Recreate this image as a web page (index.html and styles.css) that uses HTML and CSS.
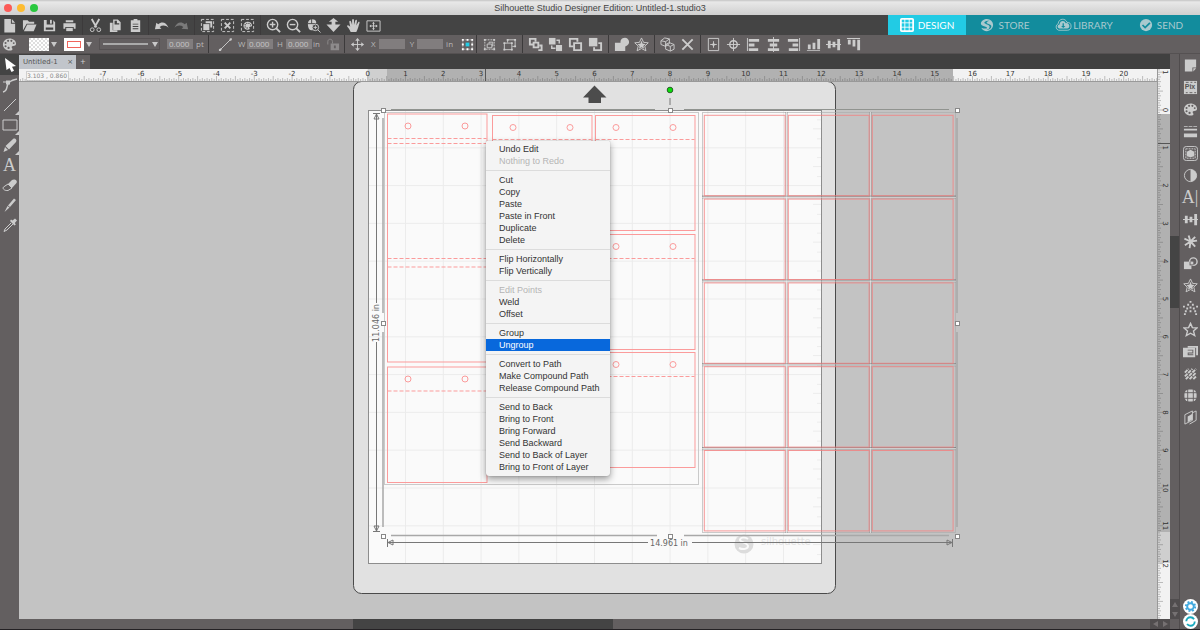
FILE: index.html
```html
<!DOCTYPE html>
<html lang="en">
<head>
<meta charset="utf-8">
<title>Silhouette Studio Designer Edition: Untitled-1.studio3</title>
<link rel="stylesheet" href="styles.css">
</head>
<body>
<svg class="defs" aria-hidden="true">
  <symbol id="new" viewBox="0 0 16 16"><path d="M2.500 1h7v5h4.500v9.500H2.500z"/><path d="M10.500 1l3.500 4h-3.500z"/></symbol>
  <symbol id="open" viewBox="0 0 16 16"><path d="M1 13V2.500h5L7.500 4H13v2H5z"/><path d="M5.500 7H15.500L12.500 14H2z"/></symbol>
  <symbol id="save" viewBox="0 0 16 16"><path fill-rule="evenodd" d="M2 2h3v5h7V2.500l2 2V14H2zM4 10v2.500h8V10z"/><path d="M8.500 2h2v4h-2z"/></symbol>
  <symbol id="print" viewBox="0 0 16 16"><path d="M4 2.500h8v2H4zM1.500 5.500h13v6h-2v-2h-9v2h-2z"/><path d="M4.500 10.500h7V14h-7z"/></symbol>
  <symbol id="cut" viewBox="0 0 16 16"><path d="M4 1l5 9M12 1L7 10" class="l2"/><circle cx="4.500" cy="12.500" r="2" class="l"/><circle cx="11.500" cy="12.500" r="2" class="l"/></symbol>
  <symbol id="copy" viewBox="0 0 16 16"><path d="M2 5h3v8h5v2H2z"/><path fill-rule="evenodd" d="M5.500 1.500h5l3 3v8.500h-8zM7 3v4h5V5.500h-2.500V3z"/><path d="M7 8h5v4H7z"/></symbol>
  <symbol id="paste" viewBox="0 0 16 16"><path fill-rule="evenodd" d="M3 2.500h3V1h4v1.500h3V15H3zM5 6v1h6V6zM5 8.500v1h6v-1zM5 11v1h6v-1z"/></symbol>
  <symbol id="undo" viewBox="0 0 16 16"><path d="M1 12L2.500 5l2 1.700C8 3.500 13 4 15.500 10.500 12.500 7.500 9 7.500 6 9.500l2 2z"/></symbol>
  <symbol id="redo" viewBox="0 0 16 16"><path d="M15 12L13.500 5l-2 1.700C8 3.500 3 4 .5 10.500 3.500 7.500 7 7.500 10 9.500l-2 2z"/></symbol>
  <symbol id="selall" viewBox="0 0 16 16"><path d="M1.500 1.500h13v13h-13z" class="dash"/><path d="M6 3.500h7V10h-2V5.500H6z"/><path d="M3.500 6.500h6.500V13H3.500z"/></symbol>
  <symbol id="desel" viewBox="0 0 16 16"><path d="M1.500 1.500h13v13h-13z" class="dash"/><path d="M5 5l6 6M11 5l-6 6" class="l2"/></symbol>
  <symbol id="palette" viewBox="0 0 16 16"><path fill-rule="evenodd" d="M8 1.500c4 0 7 2.500 7 5.800 0 2-1.500 2.200-3 2.200-2 0-2 1.500-1 2.700.8 1.200-.5 2.300-3 2.300-4 0-7-3-7-6.500s3-6.500 7-6.500zM6.500 3a1 1 0 100 2.200 1 1 0 000-2.200zM10 3a1 1 0 100 2.200A1 1 0 0010 3zM3.800 5.300a1 1 0 100 2.200 1 1 0 000-2.200zM3.800 8.800a1 1 0 100 2.200 1 1 0 000-2.200zM12.500 5.500a1 1 0 100 2 1 1 0 000-2zM7 10.500a1.200 1.200 0 100 2.400 1.200 1.200 0 000-2.400z"/></symbol>
  <symbol id="selcol" viewBox="0 0 16 16"><path d="M1.500 1.500h13v13h-13z" class="dash"/><use href="#palette" x="3" y="3" width="10.500" height="10.500"/></symbol>
  <symbol id="zin" viewBox="0 0 16 16"><circle cx="7" cy="7" r="5.500" class="m"/><path d="M11 11l4 4" class="l2"/><path d="M4 7h6M7 4v6" class="m"/></symbol>
  <symbol id="zout" viewBox="0 0 16 16"><circle cx="7" cy="7" r="5.500" class="m"/><path d="M11 11l4 4" class="l2"/><path d="M4 7h6" class="m"/></symbol>
  <symbol id="zsel" viewBox="0 0 16 16"><path d="M2 6c0-6 9-6 9-1L8 7v6C4 14 2 11 2 6z"/><path d="M2 6h8M6 1v5" stroke="#444"/><circle cx="10" cy="10" r="3.500" fill="#444" stroke="#ccc"/><path d="M12.500 12.500l3 3M8 10h4M10 8v4" class="l"/></symbol>
  <symbol id="zdrag" viewBox="0 0 16 16"><path d="M8 0l5 4h-3v3h5.500L8 15 .5 7H6V4H3z"/></symbol>
  <symbol id="hand" viewBox="0 0 16 16"><path d="M5 15C4 12 2 10 1 8.500 2 7 3.500 8.500 4.500 9.500L3.500 4c0-1.500 1.500-1.500 2 0l1 3.500V2c.3-1.300 1.700-1.300 2 0v5.500L10 2.500c.6-1.200 1.800-.8 1.700.5l-.7 5 2-3.500c.8-1 1.800-.3 1.400.8-1 3-1.400 6-3.400 9.700z"/></symbol>
  <symbol id="fit" viewBox="0 0 16 16"><path d="M1 3h14v11H1z" class="l"/><path d="M8 5v7M4.500 8.500h7" class="l"/><path d="M8 4l1.500 2h-3zM8 13l1.500-2h-3zM3.500 8.500l2-1.500v3zM12.500 8.500l-2-1.500v3z"/></symbol>
  <symbol id="line" viewBox="0 0 16 16"><path d="M2.500 13.500l11-11" class="l"/><path d="M1 13l2-1 1 1-1 2H1zM12 2l2-1 1 1-1 2h-1z"/></symbol>
  <symbol id="plainline" viewBox="0 0 16 16"><path d="M2 14L14 2" class="l"/></symbol>
  <symbol id="lock" viewBox="0 0 16 16"><path fill-rule="evenodd" d="M6 7h9v7H6zM9.500 9v3h2V9z"/><path d="M3 8V5c0-3.500 5-3.500 5 0v2" class="l"/></symbol>
  <symbol id="move" viewBox="0 0 16 16"><path d="M8 2v12M2 8h12" class="l"/><path d="M8 1l2.500 3h-5zM8 15l2.500-3h-5zM1 8l3-2.500v5zM15 8l-3-2.500v5z"/></symbol>
  <symbol id="nine" viewBox="0 0 16 16"><path d="M3 3h10v10H3z" class="l" stroke-dasharray="1 1"/><path fill="#fff" d="M2 2h2v2H2zM7 2h2v2H7zM12 2h2v2h-2zM2 7h2v2H2zM12 7h2v2h-2zM2 12h2v2H2zM7 12h2v2H7zM12 12h2v2h-2z"/><path fill="#22cbe4" d="M6 6h4v4H6z"/></symbol>
  <symbol id="group" viewBox="0 0 16 16"><path d="M3 3h10v10H3z" class="l" stroke-dasharray="2 1"/><path d="M5.500 7.500h5v4h-5zM7.500 7V5.500h4v4h-1" class="l"/><path d="M2 2h2v2H2zM12 2h2v2h-2zM2 12h2v2H2zM12 12h2v2h-2z"/></symbol>
  <symbol id="ungroup" viewBox="0 0 16 16"><path d="M2.500 6.500h8v7h-8zM6 6V3h8v7h-3" class="l"/><path d="M1.500 5.500h2v2h-2zM9.500 5.500h2v2h-2zM1.500 12.500h2v2h-2zM9.500 12.500h2v2h-2zM5 2h2v2H5zM13 2h2v2h-2zM13 9h2v2h-2z"/></symbol>
  <symbol id="front" viewBox="0 0 16 16"><path d="M6 8H2V2h6v3M11 14h3.500V9H12" class="l2"/><path d="M6 6h5v5H6z" class="l2"/></symbol>
  <symbol id="back" viewBox="0 0 16 16"><path d="M1 1h7v7H1z"/><path d="M9 3.500h3V7M4 9v3h4" class="m"/><path d="M8.500 8.500H15V15H8.500z"/></symbol>
  <symbol id="forward" viewBox="0 0 16 16"><path d="M6 10H2V2h8v3" class="l2"/><path d="M6.500 6.500H14V14H6.500z" class="l2"/></symbol>
  <symbol id="backward" viewBox="0 0 16 16"><path d="M1 1h9v9H1z"/><path d="M11 6.500h3V14H6.500v-3" class="l2"/></symbol>
  <symbol id="weld" viewBox="0 0 16 16"><path d="M1 6h6a4.500 4.500 0 117 3l-2 1v5H1z"/></symbol>
  <symbol id="star" viewBox="0 0 16 16"><path d="M8 1.500l2 4.500 5 .4-3.800 3.300L12.500 14.500 8 12l-4.500 2.500 1.300-4.800L1 6.400 6 6z" class="m"/></symbol>
  <symbol id="stars" viewBox="0 0 16 16"><path d="M8 1l2.200 4.700 5 .5-3.700 3.500 1.200 5L8 12.300l-4.700 2.400 1.200-5L.8 6.200l5-.5z" class="l"/><path d="M8 4l1.300 3.200 3.200.3L10 9.500l.7 3L8 11l-2.700 1.500.7-3-2.500-2 3.200-.3z"/></symbol>
  <symbol id="boxes" viewBox="0 0 16 16"><path d="M1 4l4-3 5 1v5l-4 3-5-2zM1 4l5 1 4-3M6 5v5M6 8l4-2 5 2v5l-4 2-5-2zM6 8l5 2 4-2M11 10v5" class="l"/></symbol>
  <symbol id="cross" viewBox="0 0 16 16"><path d="M2.500 2.500l11 11M13.500 2.500l-11 11" class="l2"/></symbol>
  <symbol id="centre" viewBox="0 0 16 16"><path d="M2.500 1.500h11v13h-11zM8 4.500v7M4.500 8h7" class="l"/><path d="M8 6l2 2-2 2-2-2z"/></symbol>
  <symbol id="target" viewBox="0 0 16 16"><circle cx="8" cy="8" r="4" class="m"/><path d="M8 1v14M1 8h14" class="l"/></symbol>
  <symbol id="al" viewBox="0 0 16 16"><path d="M1 1h1v14H1zM3 2h11v3H3zM3 7h6v3H3zM3 12h10v3H3z"/></symbol>
  <symbol id="ac" viewBox="0 0 16 16"><path d="M7.500 0h1v16h-1zM2 2h12v3H2zM4 7h8v3H4zM2 12h12v3H2z"/></symbol>
  <symbol id="ar" viewBox="0 0 16 16"><path d="M14 1h1v14h-1zM2 2h11v3H2zM7 7h6v3H7zM3 12h10v3H3z"/></symbol>
  <symbol id="ab" viewBox="0 0 16 16"><path d="M1 14h14v1H1zM2 8h3v5H2zM7 6h3v7H7zM12 2h3v11h-3z"/></symbol>
  <symbol id="am" viewBox="0 0 16 16"><path d="M0 7.500h16v1H0zM2 4h3v8H2zM7 5h3v6H7zM12 2h3v12h-3z"/></symbol>
  <symbol id="at" viewBox="0 0 16 16"><path d="M1 1h14v1H1zM2 3h3v5H2zM7 3h3v7H7zM12 3h3v11h-3z"/></symbol>
  <symbol id="arrow" viewBox="0 0 16 16"><path fill="#fff" d="M3 1l11 8-4 .7 2 4-2.500 1.300-2-4L4.500 13z"/></symbol>
  <symbol id="curve" viewBox="0 0 16 16"><path d="M1 15c5-1 3-5 5-8 2-4 5-4 9-5" class="m"/><path d="M4 3.500h4v4H4z"/><path d="M1 5h4" class="l"/></symbol>
  <symbol id="rect" viewBox="0 0 16 16"><path d="M1 3h14v10H1z" class="l"/></symbol>
  <symbol id="pencil" viewBox="0 0 16 16"><path d="M1.500 15l1.500-5 3 3zM3.500 9L11 2c2-1.500 4.500 1 3 3L7 12.500z"/></symbol>
  <symbol id="eraser" viewBox="0 0 16 16"><path d="M6 7l4-4c2-1.500 6 0 4.500 3L10 11z"/><path d="M6 7l-4.500 3c-1.500 2 1.500 4 4.500 3.500L10 11z" class="l"/></symbol>
  <symbol id="knife" viewBox="0 0 16 16"><path d="M2.500 15l3-6 2 1.500zM6 8.500L12 1.500l2 1.500-6 7z"/></symbol>
  <symbol id="dropper" viewBox="0 0 16 16"><path d="M9 2.500l1.500 1L13 1.500l2 2L12.800 6l1 1.500-1.300 1L8 4z"/><path d="M9 6l-6 6-1 2.500L5 13l6-6" class="l"/></symbol>
  <symbol id="page" viewBox="0 0 16 16"><path d="M2 1.500h12V10h-4v4.500H2z"/><path d="M11 11h3l-3 3.500z"/></symbol>
  <symbol id="frame" viewBox="0 0 16 16"><path d="M1 1h14v14H1z"/><path d="M3 2.500h3M8 2.500h2M12 2.500h2M3 13.500h2M7 13.500h3M12 13.500h2" fill="none" stroke="#635f60"/></symbol>
  <symbol id="lines" viewBox="0 0 16 16"><path d="M1 2h4v1H1zM6 2h4v1H6zM11 2h4v1h-4zM1 5h14v2H1zM1 10h14v4H1z"/></symbol>
  <symbol id="trace" viewBox="0 0 16 16"><rect x=".5" y=".5" width="15" height="15" rx="3" class="l"/><path d="M3 3h10v10H3z" class="l" stroke-dasharray="2 1"/><path d="M4 6l2-1 2-1 2 1 2 1v5l-4 1-4-1z"/></symbol>
  <symbol id="contrast" viewBox="0 0 16 16"><circle cx="8" cy="8" r="6.500" class="l"/><path d="M8 1.500a6.500 6.500 0 010 13z"/></symbol>
  <symbol id="burst" viewBox="0 0 16 16"><path d="M8 8L6 1.500M8 8l5-5M8 8l7-1M8 8l5 5.500M8 8l-1 7M8 8l-6 4M8 8L1.500 5" class="l2"/></symbol>
  <symbol id="modify" viewBox="0 0 16 16"><path d="M1 6h8v8H1z"/><circle cx="11" cy="6" r="4" class="m"/><path d="M7 6h4v4H7z" fill="#635f60"/><path d="M8 6h3v3H8z"/></symbol>
  <symbol id="dots" viewBox="0 0 16 16"><path d="M7 1h2v2H7zM4.500 4h2v2h-2zM9.500 4h2v2h-2zM0 6h2v2H0zM7 7h2v2H7zM14 6h2v2h-2zM3.500 8h2v2h-2zM10.500 8h2v2h-2zM2 11h2v2H2zM7 11h2v2H7zM12 11h2v2h-2zM1 14h2v2H1zM13 14h2v2h-2z"/></symbol>
  <symbol id="nest" viewBox="0 0 16 16"><path d="M5 2h11v10h-2V4H5z"/><path fill-rule="evenodd" d="M0 4h13v10H0zM5 6v1h5v2H5v3h6v-1H6v-1h5V6z"/></symbol>
  <symbol id="hatch" viewBox="0 0 16 16"><path d="M2 7l4-4M2 11l8-8M3 14L14 3M7 14l7-7M11 14l3-3" fill="none" stroke="#ccc" stroke-width="2" stroke-dasharray="4 1"/></symbol>
  <symbol id="globe" viewBox="0 0 16 16"><rect x="1.500" y="1.500" width="13" height="13" rx="5"/><path d="M5 1v14M11 1v14M1 5h14M1 11h14" fill="none" stroke="#635f60"/></symbol>
  <symbol id="layers" viewBox="0 0 16 16"><path d="M2 5l8-4v10l-8 4zM10 3l4-2v10l-7 4" class="l"/><path d="M5 7l5-3v6l-5 3z"/></symbol>
  <symbol id="gear" viewBox="0 0 16 16"><circle cx="8" cy="8" r="8" fill="#fff"/><circle cx="8" cy="8" r="3.500" fill="none" stroke="#41a9df" stroke-width="2"/><circle cx="8" cy="8" r="5" fill="none" stroke="#41a9df" stroke-width="2" stroke-dasharray="2 1.930"/></symbol>
  <symbol id="sync" viewBox="0 0 16 16"><circle cx="8" cy="8" r="8" fill="#fff"/><circle cx="8" cy="8" r="4.500" fill="none" stroke="#18a9bd" stroke-width="2" stroke-dasharray="11 3"/></symbol>
  <symbol id="grid" viewBox="0 0 16 16"><rect x="1" y="1" width="14" height="14" rx="1" fill="none" stroke="#fff" stroke-width="2"/><path d="M5.500 1v14M10.500 1v14M1 5.500h14M1 10.500h14" fill="none" stroke="#fff"/></symbol>
  <symbol id="swirl" viewBox="0 0 16 16"><path fill-rule="evenodd" d="M8 1a7 7 0 110 14C5 15 2.500 13.500 1.500 11c3 1.500 6.500 1.500 6.500 0S1 9.500 1 6.500C1 3 5 1 8 1zm3 2.500C8 2.500 5 4 5 5.500S11 7.500 11 10s-2 3-3.500 3.500C10 14 13 12 13 9.500S7.500 7 7.500 5.500 9.500 3.500 11 3.500z"/></symbol>
  <symbol id="cloud" viewBox="0 0 20 16"><path d="M5 14a4 4 0 01-.5-7.500C5 0 13 0 14.500 5A4.500 4.500 0 0115 14z" fill="none" stroke="#a9c9ce"/><path fill-rule="evenodd" d="M5.500 12a2.300 2.300 0 01.5-4.500c.5-5 6-5 7-1.500a3 3 0 012 6zM9.500 6v3H7.800l2.500 2.500L12.800 9H11V6z"/></symbol>
  <symbol id="check" viewBox="0 0 16 16"><circle cx="8" cy="8" r="7"/><path d="M4 8l3 3 5.500-5.500" fill="none" stroke="#128c9d" stroke-width="2"/></symbol>
</svg>

<div class="app">
  <header class="titlebar">
    <span class="lights"><i class="red"></i><i class="amber"></i><i class="green"></i></span>
    <h1>Silhouette Studio Designer Edition: Untitled-1.studio3</h1>
  </header>

  <div class="topbar">
    <div class="group"><button aria-label="New"><svg><use href="#new"/></svg></button><button aria-label="Open"><svg><use href="#open"/></svg></button><button aria-label="Save"><svg><use href="#save"/></svg></button><button aria-label="Print"><svg><use href="#print"/></svg></button></div>
    <div class="group"><button aria-label="Cut"><svg><use href="#cut"/></svg></button><button aria-label="Copy"><svg><use href="#copy"/></svg></button><button aria-label="Paste"><svg><use href="#paste"/></svg></button></div>
    <div class="group"><button aria-label="Undo"><svg><use href="#undo"/></svg></button><button class="dim" aria-label="Redo"><svg><use href="#redo"/></svg></button></div>
    <div class="group"><button aria-label="Select all"><svg><use href="#selall"/></svg></button><button aria-label="Deselect"><svg><use href="#desel"/></svg></button><button aria-label="Select by color"><svg><use href="#selcol"/></svg></button></div>
    <div class="group last"><button aria-label="Zoom in"><svg><use href="#zin"/></svg></button><button aria-label="Zoom out"><svg><use href="#zout"/></svg></button><button aria-label="Zoom selection"><svg><use href="#zsel"/></svg></button><button aria-label="Drag zoom"><svg><use href="#zdrag"/></svg></button><button aria-label="Pan"><svg><use href="#hand"/></svg></button><button aria-label="Fit to window"><svg><use href="#fit"/></svg></button></div>
    <nav class="modes">
      <a class="active" href="#design"><svg><use href="#grid"/></svg>DESIGN</a>
      <a href="#store"><svg><use href="#swirl"/></svg>STORE</a>
      <a class="wide" href="#library"><svg><use href="#cloud"/></svg>LIBRARY</a>
      <a href="#send"><svg><use href="#check"/></svg>SEND</a>
    </nav>
  </div>

  <div class="options">
    <div class="group fields style">
      <button aria-label="Colors"><svg><use href="#palette"/></svg></button>
      <button class="swatch fill" aria-label="Fill color"><i></i><b></b></button>
      <button class="swatch stroke" aria-label="Line color"><i></i><b></b></button>
      <button class="linestyle" aria-label="Line style"><i></i><b></b></button>
      <label><input aria-label="Line thickness" value="0.000"><span>pt</span></label>
    </div>
    <div class="group fields size">
      <button aria-label="Scale"><svg><use href="#line"/></svg></button>
      <label><span>W</span><input value="0.000"></label>
      <label><span>H</span><input value="0.000"><span class="unit">in</span></label>
      <button class="dim" aria-label="Lock aspect"><svg><use href="#lock"/></svg></button>
    </div>
    <div class="group fields place">
      <button aria-label="Move"><svg><use href="#move"/></svg></button>
      <label><span>X</span><input></label>
      <label><span>Y</span><input><span class="unit">in</span></label>
      <button aria-label="Anchor point"><svg><use href="#nine"/></svg></button>
    </div>
    <div class="group"><button aria-label="Group"><svg><use href="#group"/></svg></button><button aria-label="Ungroup"><svg><use href="#ungroup"/></svg></button></div>
    <div class="group"><button aria-label="Bring to front"><svg><use href="#front"/></svg></button><button aria-label="Send to back"><svg><use href="#back"/></svg></button><button aria-label="Bring forward"><svg><use href="#forward"/></svg></button><button aria-label="Send backward"><svg><use href="#backward"/></svg></button></div>
    <div class="group"><button aria-label="Weld"><svg><use href="#weld"/></svg></button><button aria-label="Offset"><svg><use href="#stars"/></svg></button></div>
    <div class="group"><button aria-label="Replicate"><svg><use href="#boxes"/></svg></button><button aria-label="Delete"><svg><use href="#cross"/></svg></button></div>
    <div class="group last"><button aria-label="Center to page"><svg><use href="#centre"/></svg></button><button aria-label="Align center"><svg><use href="#target"/></svg></button><button aria-label="Align left"><svg><use href="#al"/></svg></button><button aria-label="Align horizontal center"><svg><use href="#ac"/></svg></button><button aria-label="Align right"><svg><use href="#ar"/></svg></button><button aria-label="Align bottom"><svg><use href="#ab"/></svg></button><button aria-label="Align middle"><svg><use href="#am"/></svg></button><button aria-label="Align top"><svg><use href="#at"/></svg></button></div>
  </div>

  <main class="work">
    <aside class="tools">
      <button class="on" aria-label="Select"><svg><use href="#arrow"/></svg></button>
      <button aria-label="Edit points"><svg><use href="#curve"/></svg></button>
      <button class="more" aria-label="Line"><svg><use href="#plainline"/></svg></button>
      <button class="more" aria-label="Rectangle"><svg><use href="#rect"/></svg></button>
      <button class="more" aria-label="Draw"><svg><use href="#pencil"/></svg></button>
      <button class="letter" aria-label="Text">A</button>
      <button aria-label="Eraser"><svg><use href="#eraser"/></svg></button>
      <button aria-label="Knife"><svg><use href="#knife"/></svg></button>
      <button aria-label="Eyedropper"><svg><use href="#dropper"/></svg></button>
    </aside>

    <section class="document">
      <div class="tabs">
        <div class="tab">Untitled-1<button aria-label="Close tab">×</button></div>
        <button class="add" aria-label="New tab">+</button>
      </div>
      <div class="stage">
        <svg class="hruler" id="hruler"></svg>
        <svg class="vruler" id="vruler"></svg>
        <div class="canvas">
          <svg class="drawing"><g id="drawing" transform="translate(-19 -82)"></g></svg>
          <div class="menu" role="menu">
            <button>Undo Edit</button><button disabled>Nothing to Redo</button><hr>
            <button>Cut</button><button>Copy</button><button>Paste</button><button>Paste in Front</button><button>Duplicate</button><button>Delete</button><hr>
            <button>Flip Horizontally</button><button>Flip Vertically</button><hr>
            <button disabled>Edit Points</button><button>Weld</button><button>Offset</button><hr>
            <button>Group</button><button class="hot">Ungroup</button><hr>
            <button>Convert to Path</button><button>Make Compound Path</button><button>Release Compound Path</button><hr>
            <button>Send to Back</button><button>Bring to Front</button><button>Bring Forward</button><button>Send Backward</button><button>Send to Back of Layer</button><button>Bring to Front of Layer</button>
          </div>
        </div>
      </div>
      <div class="hscroll"><i></i><span><b class="left"></b><b class="right"></b></span></div>
    </section>

    <div class="vscroll"><i></i><span><b class="up"></b><b class="down"></b></span></div>

    <aside class="panels">
      <button aria-label="Page setup"><svg><use href="#page"/></svg></button>
      <button class="pix" aria-label="PixScan"><svg><use href="#frame"/></svg><em>Pix</em></button>
      <button aria-label="Fill"><svg><use href="#palette"/></svg></button>
      <button aria-label="Line style"><svg><use href="#lines"/></svg></button>
      <button aria-label="Trace"><svg><use href="#trace"/></svg></button>
      <button aria-label="Image effects"><svg><use href="#contrast"/></svg></button>
      <button class="letter" aria-label="Text style">A|</button>
      <button aria-label="Align"><svg><use href="#am"/></svg></button>
      <button aria-label="Transform"><svg><use href="#burst"/></svg></button>
      <button aria-label="Modify"><svg><use href="#modify"/></svg></button>
      <button aria-label="Offset"><svg><use href="#stars"/></svg></button>
      <button aria-label="Rhinestones"><svg><use href="#dots"/></svg></button>
      <button aria-label="Stipple"><svg><use href="#star"/></svg></button>
      <button aria-label="Nesting"><svg><use href="#nest"/></svg></button>
      <button aria-label="Sketch"><svg><use href="#hatch"/></svg></button>
      <button aria-label="Warp"><svg><use href="#globe"/></svg></button>
      <button aria-label="Layers"><svg><use href="#layers"/></svg></button>
      <div class="status"><button aria-label="Preferences"><svg><use href="#gear"/></svg></button><button aria-label="Sync"><svg><use href="#sync"/></svg></button></div>
    </aside>
  </main>
</div>
<script src="app.js"></script>
</body>
</html>
```
FILE: styles.css
```css
* { box-sizing: border-box; }
body { margin: 0; font-family: "Liberation Sans", Arial, sans-serif; font-size: 9px; color: #ccc; background: #444; overflow: hidden; }
button { border: 0; padding: 0; margin: 0; background: none; color: inherit; font: inherit; display: flex; align-items: center; justify-content: center; }
svg { display: block; fill: #ccc; }
.defs { position: absolute; width: 0; height: 0; }
.l { fill: none; stroke: #ccc; stroke-width: 1; }
.m { fill: none; stroke: #ccc; stroke-width: 1.5; }
.l2 { fill: none; stroke: #ccc; stroke-width: 2; }
.dash { fill: none; stroke: #ccc; stroke-width: 1; stroke-dasharray: 3 2; }

.app { height: 100vh; display: flex; flex-direction: column; border-bottom: 1px solid #242124; }
.titlebar { height: 15px; flex: none; display: grid; grid-template-columns: 1fr auto 1fr; align-items: center; background: linear-gradient(#c4c4c4, #e8e8e8 2px, #cfcfcf); }
.titlebar h1 { margin: 0; font: 9px/14px "Liberation Sans", Arial, sans-serif; color: #444; }
.lights { display: flex; gap: 5px; padding-left: 4px; }
.lights i { width: 8px; height: 8px; border-radius: 50%; }
.red { background: #fc5b57; }
.amber { background: #fdbc31; }
.green { background: #2ac83f; }

.topbar { height: 20px; flex: none; display: flex; background: #444; }
.options { height: 19px; flex: none; display: flex; background: #635f60; border-bottom: 1px solid #555152; }
.group { display: flex; align-items: center; gap: 2px; padding: 0 4px 0 3px; border-right: 1px solid #3c3a3b; }
.topbar .group:first-child, .options .group:first-child { padding-left: 0; }
.group.last { border: 0; }
.group button { width: 18px; height: 18px; flex: none; }
.group svg { width: 15px; height: 15px; }
.dim { opacity: .4; }

.modes { margin-left: auto; width: 312px; display: grid; grid-template-columns: repeat(4, 1fr); background: #128c9d; }
.modes a { display: flex; align-items: center; justify-content: center; gap: 4px; color: #a9c9ce; font: 10px/20px Lato, sans-serif; text-decoration: none; }
.modes svg { width: 14px; height: 14px; fill: #a9c9ce; }
.modes .active { background: #22cbe4; color: #fff; }
.modes .wide { gap: 0; }
.modes .wide svg { width: 20px; height: 14px; }

.options .swatch { width: 28px; height: 14px; justify-content: space-between; margin-left: 9px; }
.options .stroke { margin-left: 5px; }
.swatch i { width: 20px; height: 13px; background: #fff; }
.fill i { background: repeating-conic-gradient(#fff 0 25%, #dedede 0 50%) 0 0 / 4px 4px; }
.stroke i { border: 3px solid #fff; outline: 1px solid #f0645c; outline-offset: -4px; }
.swatch b, .linestyle b { border: 3px solid transparent; border-top: 5px solid #c8c8c8; border-bottom: 0; }
.options .linestyle { width: 61px; height: 12px; border: 1px solid #565253; margin-left: 5px; padding: 0 1px 0 3px; gap: 4px; }
.linestyle i { flex: 1; height: 2px; background: #aaa; }
label { display: flex; align-items: center; gap: 3px; color: #b9b9b9; font: 8px/10px "Open Sans", sans-serif; }
label input { width: 26px; height: 10px; padding: 0 2px; border: 0; background: #817d7e; color: #c6c6c6; font: 8px/10px "Open Sans", sans-serif; }
.style { width: 209px; }
.style label { margin-left: 5px; }
.size { width: 136px; gap: 4px; padding-left: 7px; }
.size label { gap: 1px; }
.size label span:first-child { width: 8px; }
.place { width: 132px; gap: 5px; }

.work { flex: 1; min-height: 0; display: flex; }
.tools { width: 19px; flex: none; background: #635f60; }
.tools button { width: 100%; height: 20px; position: relative; }
.tools svg { width: 16px; height: 16px; }
.tools .on { height: 21px; background: #444; }
.tools .more::after { content: ""; position: absolute; right: 0; bottom: 0; border: 2px solid transparent; border-right-color: #ccc; border-bottom-color: #ccc; }
.tools .letter, .panels .letter { font: 18px/20px "Liberation Serif", serif; }

.document { flex: 1; min-width: 0; display: flex; flex-direction: column; }
.tabs { height: 15px; flex: none; display: flex; align-items: flex-end; background: #404040; }
.tab { width: 57px; height: 14px; display: flex; align-items: center; justify-content: space-between; padding: 0 3px 0 4px; background: #c1c5cb; color: #555; font: 7px/14px "DejaVu Sans", sans-serif; white-space: nowrap; }
.add { width: 14px; height: 14px; background: #635f60; }
.stage { flex: 1; min-height: 0; display: grid; grid-template: "h v" 13px "c v" 1fr / 1fr 13px; }
.hruler { grid-area: h; width: 100%; height: 13px; }
.vruler { grid-area: v; width: 13px; height: 100%; }
.hruler text, .vruler text { font: 7px "DejaVu Sans", sans-serif; fill: #333; text-anchor: middle; }
.hruler .cursor { font-size: 6px; fill: #888; }
.canvas { grid-area: c; position: relative; overflow: hidden; background: #c3c3c3; }
.drawing { width: 100%; height: 100%; }
.dimtext { font: 8px "DejaVu Sans", sans-serif; fill: #666; text-anchor: middle; }
.brand { font: 10px "DejaVu Sans", sans-serif; fill: #e2e2e2; }
.cut { fill: none; stroke: #fb9b9b; }
.score { fill: none; stroke: #fb9b9b; stroke-dasharray: 4 2; }
.hscroll { height: 10px; flex: none; display: flex; background: #635f60; }
.hscroll i { width: 260px; margin-left: 334px; background: #444; }
.hscroll span { margin-left: auto; width: 20px; background: #504d4e; display: flex; align-items: center; justify-content: space-around; }
.vscroll { width: 10px; flex: none; display: flex; flex-direction: column; background: #635f60; border-right: 1px solid #504c4d; }
.vscroll i { margin-top: 182px; height: 72px; background: #444; }
.vscroll span { margin: auto 0 10px; height: 20px; background: #504d4e; display: flex; flex-direction: column; align-items: center; justify-content: space-around; }
.hscroll b, .vscroll b { border: 0 solid transparent; }
.hscroll .left { border-width: 3px 5px 3px 0; border-right-color: #757172; }
.hscroll .right { border-width: 3px 0 3px 5px; border-left-color: #757172; }
.vscroll .up { border-width: 0 3px 5px; border-bottom-color: #757172; }
.vscroll .down { border-width: 5px 3px 0; border-top-color: #757172; }
.panels { width: 20px; flex: none; display: flex; flex-direction: column; background: #635f60; }
.panels button { width: 20px; height: 22px; flex: none; }
.panels svg { width: 15px; height: 15px; }
.pix { position: relative; }
.pix em { position: absolute; font: bold 7px/8px "Liberation Sans", sans-serif; color: #555; }
.status { margin-top: auto; }
.panels .status button { height: 15px; }

.menu { position: absolute; left: 467px; top: 59px; width: 124px; padding: 2px 0 3px; background: #f4f4f4; border-radius: 1px 1px 3px 3px; box-shadow: 0 3px 7px rgba(0, 0, 0, .4), 0 0 1px rgba(0, 0, 0, .4); }
.menu button { width: 100%; height: 12px; padding-left: 13px; justify-content: flex-start; color: #333; font: 9px/12px "Liberation Sans", Arial, sans-serif; white-space: nowrap; }
.menu button:disabled { color: #b4b4b4; }
.menu .hot { background: #0868dc; color: #fff; }
.menu hr { height: 1px; margin: 3px 0; border: 0; background: #dcdcdc; }
```
FILE: app.js
```js
const INCH = 37.8;
const ORIGIN = { x: 367.7, y: 110 };
const rect = (x, y, w, h, extra) => `<rect x="${x}" y="${y}" width="${w}" height="${h}" ${extra}/>`;
const path = (d, extra) => `<path d="${d}" ${extra}/>`;

function ticks(from, to, zero, edge, dir, vertical) {
  let d = "";
  for (let n = Math.ceil((from - zero) * 16 / INCH); zero + n * INCH / 16 < to; n++) {
    const p = zero + n * INCH / 16;
    const len = n % 8 === 0 ? 6 : n % 2 === 0 ? 4 : 3;
    d += vertical ? `M${edge} ${p}h${dir * len}` : `M${p} ${edge}v${dir * len}`;
  }
  return path(d, 'fill="none" stroke="#555" stroke-opacity=".5" stroke-width="0.7"');
}

function horizontalRuler() {
  const zero = ORIGIN.x - 19;
  let s = rect(0, 0, "100%", 13, 'fill="#f2f2f2"') + rect(zero, 0, 20, 13, 'fill="#cfcfcf"') + rect(368, 0, 566, 13, 'fill="#b1b1b1"');
  s += ticks(0, 1138, zero, 13, -1, false);
  for (let n = -7; n <= 20; n++) s += `<text x="${zero + n * INCH}" y="7">${n}</text>`;
  s += path("M466.500 0v13", 'stroke="#555"') + rect(7.5, 2.5, 42, 9, 'fill="#f6f6f6" stroke="#aaa" stroke-dasharray="1 1"');
  s += '<text class="cursor" x="28" y="9">3.103 , 0.860</text>' + path("M0 12.500H1138", 'stroke="#999"');
  document.getElementById("hruler").innerHTML = s;
}

function verticalRuler() {
  const zero = ORIGIN.y - 69;
  let s = rect(0, 0, 13, "100%", 'fill="#f2f2f2"') + rect(0, 45, 13, 418, 'fill="#b1b1b1"') + rect(0, 463, 13, 31, 'fill="#cfcfcf"');
  s += ticks(0, 550, zero, 0, 1, true);
  for (let n = -1; n <= 12; n++) s += `<text transform="translate(6 ${zero + n * INCH}) rotate(90)">${Math.abs(n)}</text>`;
  s += path("M0 74.500h13", 'stroke="#555"') + path("M.5 0V550", 'stroke="#999"');
  document.getElementById("vruler").innerHTML = s;
}

function card(x, y, h, folds) {
  const holes = [x + 20.5, x + 77.5].map(cx => `<circle cx="${cx}" cy="${y + 12}" r="3" class="cut"/>`).join("");
  return rect(x, y, 99.5, h, 'class="cut"') + holes + folds.map(f => path(`M${x} ${f}h99`, 'class="score"')).join("");
}

function drawing() {
  let s = rect(353.5, 81.5, 482, 512, 'rx="8" fill="#e1e1e1" stroke="#4a4a4a"');
  s += rect(368.5, 110.5, 453, 453, 'fill="#fafafa" stroke="#8d8d8d"');
  let grid = "", marks = "";
  for (let n = 1; n <= 12; n++) {
    const y = ORIGIN.y + n * INCH;
    if (n < 12) grid += `M${ORIGIN.x + n * INCH} 111V563M369 ${y}H821`;
    marks += `M813 ${y - 19}h8M817 ${y - 28}h4M817 ${y - 9}h4`;
  }
  s += path(grid + marks, 'fill="none" stroke="#ececec"');
  s += path("M594.500 85.500L606.500 97.500H601V103H588.500V97.500H583z", 'fill="#4c4c4c"');
  s += '<circle cx="744" cy="544" r="9.500" fill="#dcdcdc"/>' + path("M748 539c-4-3-8-1-8 1s8 3 8 6-5 4-9 2", 'fill="none" stroke="#fafafa" stroke-width="2"');
  s += '<text class="brand" x="761" y="545">silhouette</text>';

  s += card(387.5, 114, 248, [138.5, 143.5, 258.5, 267]) + card(387.5, 367, 115.5, [391]);
  s += card(492.5, 115.5, 115, [139.5]) + card(595.5, 115.5, 115, [139.5]) + card(595.5, 234.5, 115, [258.5]) + card(595.5, 352.5, 115, [376.5]);
  s += rect(384.5, 112.5, 314, 372, 'fill="none" stroke="#cacaca"');

  s += rect(702.5, 112.5, 253, 420, 'fill="none" stroke="#aaa" stroke-opacity=".6"');
  let gutters = "";
  for (let c = 1; c < 3; c++) gutters += `M${702.5 + c * 84} 112V533`;
  for (let r = 1; r < 5; r++) gutters += `M702 ${113.5 + r * 83.8}H956`;
  s += path(gutters, 'fill="none" stroke="#888" stroke-opacity=".4" stroke-width="3"');
  s += path(gutters, 'fill="none" stroke="#f4f4f4" stroke-opacity=".6"');
  let seams = "";
  for (let r = 1; r < 5; r++) seams += `M702 ${112.3 + r * 83.8}H956`;
  s += path(seams, 'fill="none" stroke="#555" stroke-opacity=".5" stroke-width="0.8"');
  for (let c = 0; c < 3; c++)
    for (let r = 0; r < 5; r++)
      s += rect(704.3 + c * 84, 115.3 + r * 83.8, 80.8, 80.4, 'fill="none" stroke="#f58080" stroke-opacity=".8"');

  s += path("M391 109.500H655M684 109.500H949", 'stroke="#90938f"');
  s += path("M391 535.500H657M684 535.500H949M383 118V313M383 332V527M957 118V313M957 332V527", 'fill="none" stroke="#a8a8a8" stroke-width="1.500"');
  s += path("M376.500 114V303M376.500 342V532M373 113.500h7M373 531.500h7M376.500 114l2.500 5h-5zM376.500 531l2.500-5h-5zM387.500 542.500H648M692 542.500H952M387.500 539v8M952.500 539v8M388 542.500l5-2.500v5zM952 542.500l-5-2.500v5zM670 98V105", 'fill="none" stroke="#777"');
  for (const [x, y] of [[383, 110], [670, 110], [957, 110], [383, 323], [957, 323], [383, 536], [670, 536], [957, 536]])
    s += rect(x - 1.5, y - 1.5, 4, 4, 'fill="#fff" stroke="#888"');
  s += '<circle cx="670" cy="90" r="2.800" fill="#0be00b" stroke="#286028"/>';
  s += '<text class="dimtext" x="669" y="546">14.961 in</text><text class="dimtext" transform="translate(379 323) rotate(-90)">11.046 in</text>';
  document.getElementById("drawing").innerHTML = s;
}

horizontalRuler();
verticalRuler();
drawing();
```
